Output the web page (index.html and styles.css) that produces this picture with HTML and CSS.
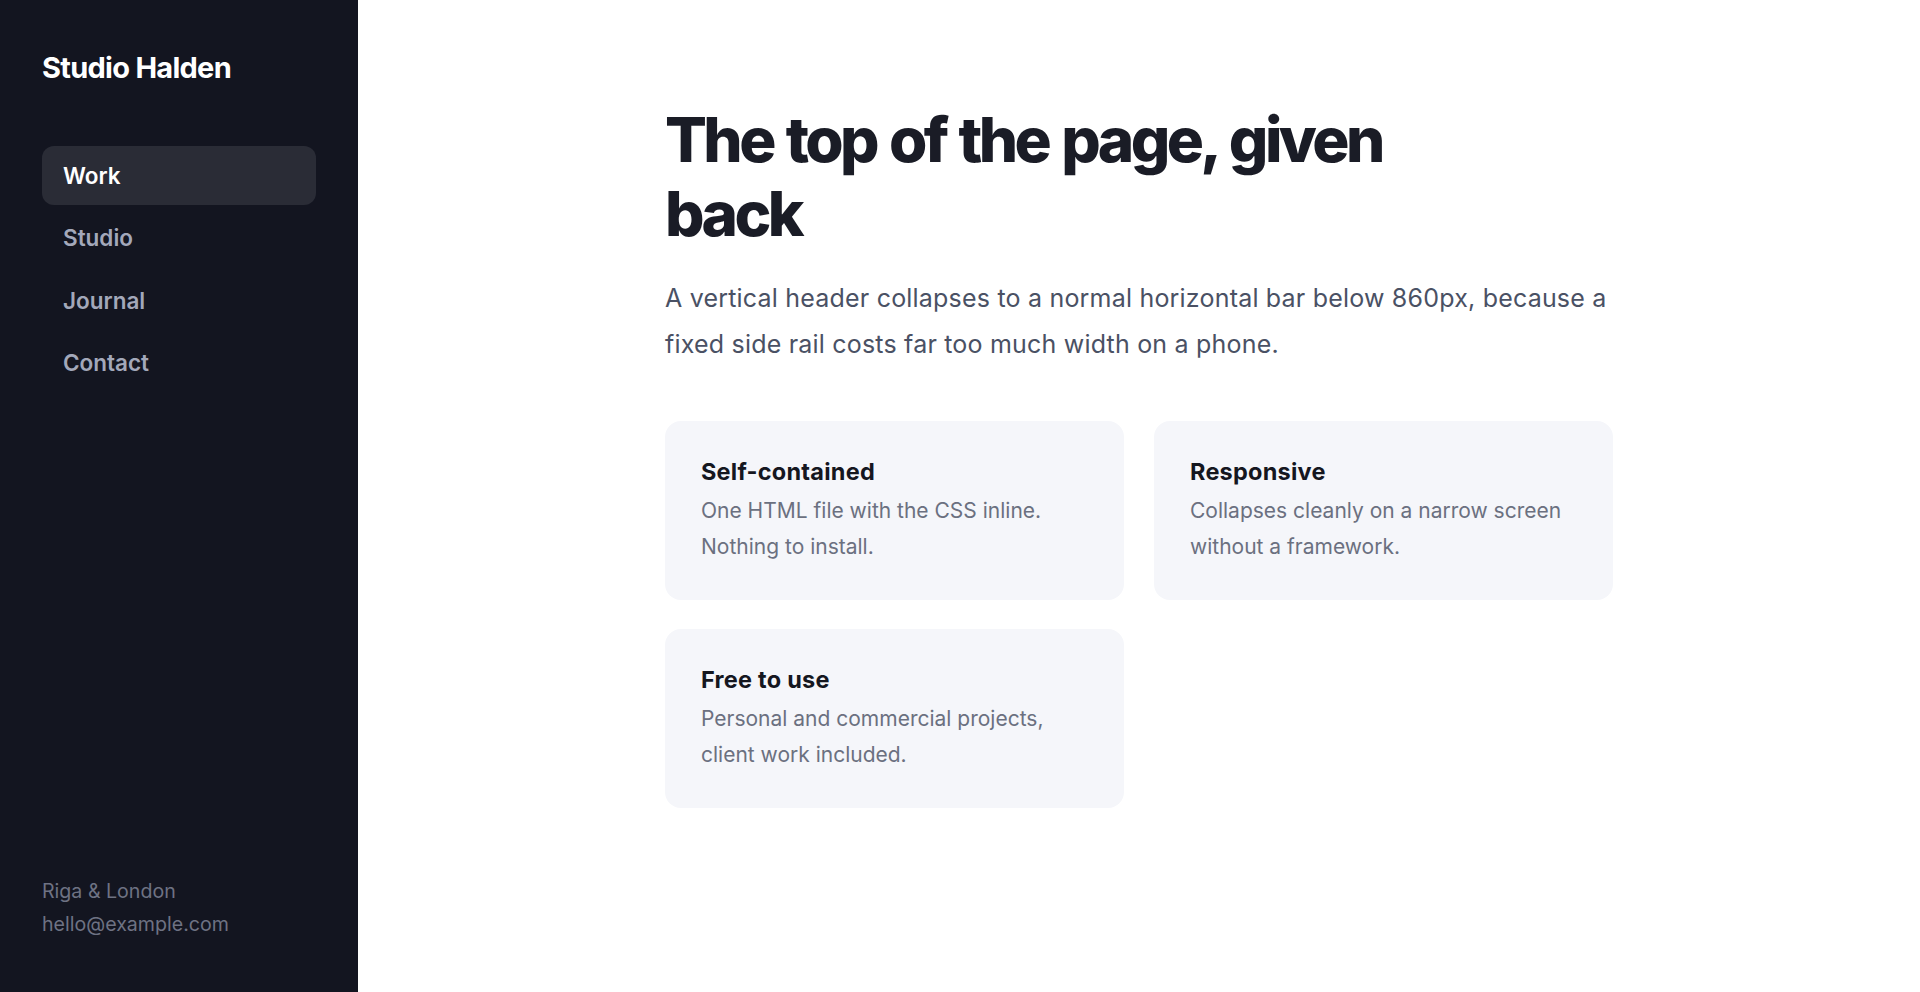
FILE: index.html
```html
<!DOCTYPE html>
<html lang="en">
<head>
    <meta charset="UTF-8">
    <meta name="viewport" content="width=device-width, initial-scale=1.0">
    <title>Studio Halden</title>
    <link rel="stylesheet" href="styles.css">
</head>
<body>
    <div class="layout">
        <!-- Side rail -->
        <header class="rail">
            <div class="brand">Studio Halden</div>
            <nav class="nav">
                <a href="#" class="nav-item active">Work</a>
                <a href="#" class="nav-item">Studio</a>
                <a href="#" class="nav-item">Journal</a>
                <a href="#" class="nav-item">Contact</a>
            </nav>
            <div class="rail-foot">
                <div>Riga &amp; London</div>
                <div>hello@example.com</div>
            </div>
        </header>

        <!-- Main content -->
        <main class="main">
            <div class="content">
                <h1>The top of the page, given back</h1>
                <p class="lead">A vertical header collapses to a normal horizontal bar below 860px, because a fixed side rail costs far too much width on a phone.</p>

                <div class="cards">
                    <div class="card">
                        <h3>Self-contained</h3>
                        <p>One HTML file with the CSS inline. Nothing to install.</p>
                    </div>
                    <div class="card">
                        <h3>Responsive</h3>
                        <p>Collapses cleanly on a narrow screen without a framework.</p>
                    </div>
                    <div class="card">
                        <h3>Free to use</h3>
                        <p>Personal and commercial projects, client work included.</p>
                    </div>
                </div>
            </div>
        </main>
    </div>
</body>
</html>
```

FILE: styles.css
```css
body {
    font-family: Inter, "Noto Sans", sans-serif;
    margin: 0;
    padding: 0;
    background-color: #fff;
}

.layout {
    display: flex;
    min-height: 100vh;
}

.rail {
    width: 358px;
    flex-shrink: 0;
    box-sizing: border-box;
    padding: 50px 42px 51px;
    background-color: #131520;
    display: flex;
    flex-direction: column;
}

.brand {
    color: #fff;
    font-size: 29px;
    font-weight: 700;
    letter-spacing: -0.025em;
    line-height: 35px;
}

.nav {
    margin-top: 61px;
    display: flex;
    flex-direction: column;
    gap: 3.5px;
}

.nav-item {
    display: block;
    padding: 14.5px 21px;
    line-height: 30px;
    font-size: 22.5px;
    font-weight: 600;
    color: #a3a8ba;
    text-decoration: none;
    border-radius: 12px;
}

.nav-item.active {
    background-color: #2a2c36;
    color: #fff;
}

.rail-foot {
    margin-top: auto;
    font-size: 19.6px;
    line-height: 33px;
    color: #6e7283;
}

.main {
    flex: 1;
    padding: 103px 40px 60px;
}

.content {
    max-width: 948px;
    margin: 0 auto;
}

h1 {
    margin: 0;
    max-width: 800px;
    font-size: 62px;
    line-height: 74px;
    font-weight: 800;
    letter-spacing: -0.058em;
    word-spacing: 3px;
    color: #1a1c26;
}

.lead {
    margin: 24px 0 0;
    font-size: 25px;
    line-height: 46px;
    letter-spacing: 0.008em;
    color: #4a5164;
}

.cards {
    margin-top: 54px;
    display: grid;
    grid-template-columns: 1fr 1fr;
    gap: 29px 30px;
}

.card {
    background-color: #f5f6fa;
    border-radius: 16px;
    padding: 35.5px 36px;
}

.card h3 {
    margin: 0;
    font-size: 23.5px;
    line-height: 30px;
    font-weight: 700;
    letter-spacing: 0.01em;
    color: #15171f;
}

.card p {
    margin: 6px 0 0;
    font-size: 21px;
    line-height: 36px;
    color: #6b7080;
}
```
